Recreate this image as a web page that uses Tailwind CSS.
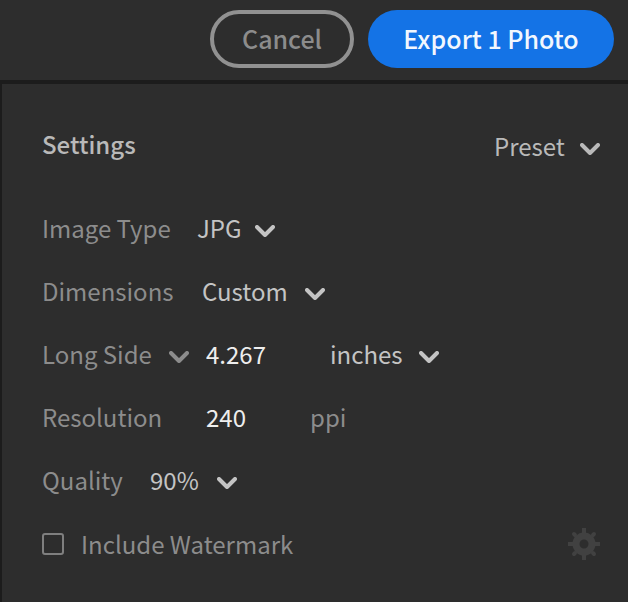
<!DOCTYPE html>
<html lang="en">
<head>
  <meta charset="UTF-8" />
  <meta name="viewport" content="width=device-width, initial-scale=1.0" />
  <title>Export</title>
  <script src="https://cdn.jsdelivr.net/npm/@tailwindcss/browser@4"></script>
</head>
<body class="bg-[#2d2d2d] text-[#8c8c8c] font-['Noto_Sans_CJK_SC',sans-serif] text-[24px] leading-8 flex flex-col min-h-screen">
  <!-- Actions -->
  <header class="flex justify-end gap-[14px] pt-[10px] pr-[14px] pb-3 text-[25px]">
    <button type="button" class="h-[58px] w-36 pb-[2px] rounded-full border-4 border-[#919191] font-medium">Cancel</button>
    <button type="button" class="h-[58px] w-[246px] pb-[2px] rounded-full bg-[#1473e6] text-[#f2f7fe] font-medium">Export 1 Photo</button>
  </header>

  <main class="flex-1 border-t-4 border-l-2 border-[#1c1c1c] pl-10 pr-7">
    <div class="flex items-start justify-between pt-[46px] h-28">
      <h1 class="font-medium leading-7 text-[#b9b9b9]">Settings</h1>
      <div class="relative text-[#b9b9b9]">
        <select aria-label="Preset" class="appearance-none block w-[106px]">
          <option>Preset</option>
        </select>
        <svg class="absolute right-0 top-[13px] w-5 h-3 pointer-events-none" viewBox="0 0 20 12" fill="none" stroke="currentColor" stroke-width="4" stroke-linecap="round" stroke-linejoin="round"><path d="M2 2l8 8 8-8" /></svg>
      </div>
    </div>

    <!-- Image type -->
    <div class="flex items-center h-[63px]">
      <label for="type" class="w-[155px]">Image Type</label>
      <div class="relative text-[#c4c4c4]">
        <select id="type" class="appearance-none block w-[78px]">
          <option>JPG</option>
        </select>
        <svg class="absolute right-0 top-[13px] w-5 h-3 pointer-events-none" viewBox="0 0 20 12" fill="none" stroke="currentColor" stroke-width="4" stroke-linecap="round" stroke-linejoin="round"><path d="M2 2l8 8 8-8" /></svg>
      </div>
    </div>

    <!-- Dimensions -->
    <div class="flex items-center h-[63px]">
      <label for="dimensions" class="w-40">Dimensions</label>
      <div class="relative text-[#c4c4c4]">
        <select id="dimensions" class="appearance-none block w-[123px]">
          <option>Custom</option>
        </select>
        <svg class="absolute right-0 top-[13px] w-5 h-3 pointer-events-none" viewBox="0 0 20 12" fill="none" stroke="currentColor" stroke-width="4" stroke-linecap="round" stroke-linejoin="round"><path d="M2 2l8 8 8-8" /></svg>
      </div>
    </div>

    <!-- Side length -->
    <div class="flex items-center h-[63px]">
      <div class="relative w-[147px] mr-[17px]">
        <select aria-label="Side" class="appearance-none block w-full">
          <option>Long Side</option>
        </select>
        <svg class="absolute right-0 top-[13px] w-5 h-3 pointer-events-none" viewBox="0 0 20 12" fill="none" stroke="currentColor" stroke-width="4" stroke-linecap="round" stroke-linejoin="round"><path d="M2 2l8 8 8-8" /></svg>
      </div>
      <input type="text" aria-label="Side length" value="4.267" class="w-[124px] text-[#eeeeee]" />
      <div class="relative text-[#c4c4c4]">
        <select aria-label="Unit" class="appearance-none block w-[109px]">
          <option>inches</option>
        </select>
        <svg class="absolute right-0 top-[13px] w-5 h-3 pointer-events-none" viewBox="0 0 20 12" fill="none" stroke="currentColor" stroke-width="4" stroke-linecap="round" stroke-linejoin="round"><path d="M2 2l8 8 8-8" /></svg>
      </div>
    </div>

    <!-- Resolution -->
    <div class="flex items-center h-[63px]">
      <label for="resolution" class="w-[164px]">Resolution</label>
      <input id="resolution" type="text" value="240" class="w-[104px] text-[#eeeeee]" />
      <span>ppi</span>
    </div>

    <!-- Quality -->
    <div class="flex items-center h-[63px]">
      <label for="quality" class="w-[108px]">Quality</label>
      <div class="relative text-[#c4c4c4]">
        <select id="quality" class="appearance-none block w-[87px]">
          <option>90%</option>
        </select>
        <svg class="absolute right-0 top-[13px] w-5 h-3 pointer-events-none" viewBox="0 0 20 12" fill="none" stroke="currentColor" stroke-width="4" stroke-linecap="round" stroke-linejoin="round"><path d="M2 2l8 8 8-8" /></svg>
      </div>
    </div>

    <!-- Watermark -->
    <div class="flex items-center h-[65px]">
      <input id="watermark" type="checkbox" class="appearance-none w-[22px] h-[22px] border-2 border-[#7f7f7f] rounded-[3px] checked:bg-[#919191]" />
      <label for="watermark" class="ml-[17px]">Include Watermark</label>
      <button type="button" aria-label="Watermark settings" class="ml-auto text-[#414141]">
        <svg class="w-8 h-8" viewBox="-16 -16 32 32" fill="none" stroke="currentColor">
          <circle r="8" stroke-width="7" />
          <path stroke-width="4" d="M0-16v6M0 16v-6M-16 0h6M16 0h-6" />
          <path stroke-width="4" stroke-linecap="round" d="M-9-9l-1-1M9-9l1-1M-9 9l-1 1M9 9l1 1" />
        </svg>
      </button>
    </div>
  </main>
</body>
</html>
